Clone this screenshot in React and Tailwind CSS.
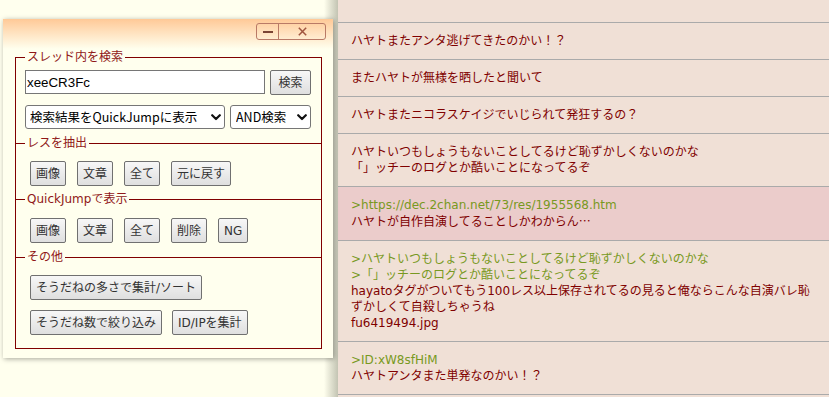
import { useState } from "react";

const FONT = { fontFamily: '"DejaVu Sans", "Noto Sans CJK JP", sans-serif' };

const posts = [
  { lines: [{ t: "ハヤトまたアンタ逃げてきたのかい！？" }] },
  { lines: [{ t: "またハヤトが無様を晒したと聞いて" }] },
  { lines: [{ t: "ハヤトまたニコラスケイジでいじられて発狂するの？" }] },
  {
    lines: [
      { t: "ハヤトいつもしょうもないことしてるけど恥ずかしくないのかな" },
      { t: "「」ッチーのログとか酷いことになってるぞ" },
    ],
  },
  {
    hl: true,
    lines: [
      { t: ">https://dec.2chan.net/73/res/1955568.htm", q: true },
      { t: "ハヤトが自作自演してることしかわからん", tail: "…" },
    ],
  },
  {
    lines: [
      { t: ">ハヤトいつもしょうもないことしてるけど恥ずかしくないのかな", q: true },
      { t: ">「」ッチーのログとか酷いことになってるぞ", q: true },
      { t: "hayatoタグがついてもう100レス以上保存されてるの見ると俺ならこんな自演バレ恥" },
      { t: "ずかしくて自殺しちゃうね" },
      { t: "fu6419494.jpg" },
    ],
  },
  {
    lines: [
      { t: ">ID:xW8sfHiM", q: true },
      { t: "ハヤトアンタまた単発なのかい！？" },
    ],
  },
];

function Btn({ children }) {
  return (
    <button className="h-[25px] px-[5px] border border-[#707070] rounded-[2px] bg-linear-to-b from-[#f7f7f7] to-[#dfdfdf] text-[12px] leading-none text-[#333] whitespace-nowrap">
      {children}
    </button>
  );
}

function Chevron() {
  return (
    <svg width="10" height="7" viewBox="0 0 10 7" className="pointer-events-none absolute right-[4px] top-[9px]">
      <path d="M1.2 1.2 L5 5 L8.8 1.2" fill="none" stroke="#111" strokeWidth="2.2" strokeLinecap="round" strokeLinejoin="round" />
    </svg>
  );
}

function Section({ title, first, last, children, className = "" }) {
  return (
    <fieldset
      className={`border-x border-t border-[#800000] pl-[9px] pr-[10px] ${last ? "border-b" : "border-b-0"} ${first ? "" : "-mt-2"} ${className}`}
    >
      <legend className="px-[2px] text-[12px] leading-[17px] text-[#901818]">{title}</legend>
      {children}
    </fieldset>
  );
}

export default function App() {
  const [query, setQuery] = useState("xeeCR3Fc");

  return (
    <div className="relative flex h-[397px] w-[829px] overflow-hidden bg-[#ffffee]" style={FONT}>
      <div className="w-[324px] shrink-0 bg-[#ffffee]" />
      <div className="w-[14px] shrink-0 bg-linear-to-r from-[#ffffee] to-[#c3c4b3]" />

      <div className="flex-1 bg-[#f0e0d6] text-[12px] leading-4">
        <div className="h-[23px] border-b border-[#aaaaaa]" />
        {posts.map((p, i) => (
          <div
            key={i}
            className={`border-b border-[#aaaaaa] py-[10px] pl-[13px] pr-[13px] ${p.hl ? "bg-[#ebcccb]" : ""}`}
          >
            {p.lines.map((l, j) => (
              <div key={j} className={`whitespace-nowrap ${l.q ? "text-[#789922]" : "text-[#800000]"}`}>
                {l.t}
                {l.tail && <span style={{ fontFamily: '"Noto Sans CJK JP", sans-serif' }}>{l.tail}</span>}
              </div>
            ))}
          </div>
        ))}
      </div>

      {/* floating search window */}
      <div className="absolute left-[3px] top-[19px] w-[330px] bg-[#ffffee] shadow-[1px_1px_5px_rgba(0,0,0,0.35)]">
        <div className="flex h-[30px] justify-end bg-linear-to-b from-[#ffc997] to-[#ffffee] pr-[7px] pt-[4px]">
          <div className="flex h-[17px] overflow-hidden rounded-[3px] border border-[#b97a66]">
            <button className="flex w-[21px] items-center justify-center">
              <span className="block h-[2px] w-[10px] bg-[#7a4434]" />
            </button>
            <button className="flex w-[47px] items-center justify-center border-l border-[#b97a66]">
              <svg width="9" height="9" viewBox="0 0 9 9">
                <path d="M0.8 0.8 L8.2 8.2 M8.2 0.8 L0.8 8.2" stroke="#a0553f" strokeWidth="1.5" />
              </svg>
            </button>
          </div>
        </div>

        <div className="pb-[9px] pl-3 pr-[11px]">
          <Section title="スレッド内を検索" first className="pb-[14px] pt-[4px]">
            <div className="flex gap-[5px]">
              <input
                value={query}
                onChange={(e) => setQuery(e.target.value)}
                className="h-[24px] min-w-0 flex-1 border border-[#767676] bg-white px-[1px] text-[13.33px] text-black outline-none"
                style={{ fontFamily: '"Liberation Sans", "Noto Sans CJK JP", sans-serif' }}
              />
              <Btn>
                <span className="inline-block w-[29px]">検索</span>
              </Btn>
            </div>
            <div className="mt-[10px] flex gap-[5px]" style={{ fontFamily: '"Noto Sans CJK JP", sans-serif' }}>
              <div className="relative w-[200px]">
                <select className="block h-[24px] w-full appearance-none rounded-[3px] border border-[#767676] bg-white pl-[4px] text-[12.5px] text-black">
                  <option>検索結果をQuickJumpに表示</option>
                </select>
                <Chevron />
              </div>
              <div className="relative w-[81px]">
                <select className="block h-[24px] w-full appearance-none rounded-[3px] border border-[#767676] bg-white pl-[5px] text-[12.5px] text-black">
                  <option>AND検索</option>
                </select>
                <Chevron />
              </div>
            </div>
          </Section>

          <Section title="レスを抽出" className="pb-[13px] pt-[9px]">
            <div className="flex gap-[11px] pl-[5px]">
              <Btn>画像</Btn>
              <Btn>文章</Btn>
              <Btn>全て</Btn>
              <Btn>元に戻す</Btn>
            </div>
          </Section>

          <Section title="QuickJumpで表示" className="pb-[14px] pt-[10px]">
            <div className="flex gap-[11px] pl-[5px]">
              <Btn>画像</Btn>
              <Btn>文章</Btn>
              <Btn>全て</Btn>
              <Btn>削除</Btn>
              <Btn>NG</Btn>
            </div>
          </Section>

          <Section title="その他" last className="pb-[13px] pt-[9px]">
            <div className="flex flex-col gap-[10px] pl-[5px]">
              <div className="flex">
                <Btn>そうだねの多さで集計/ソート</Btn>
              </div>
              <div className="flex gap-[10px]">
                <Btn>そうだね数で絞り込み</Btn>
                <Btn>ID/IPを集計</Btn>
              </div>
            </div>
          </Section>
        </div>
      </div>
    </div>
  );
}
